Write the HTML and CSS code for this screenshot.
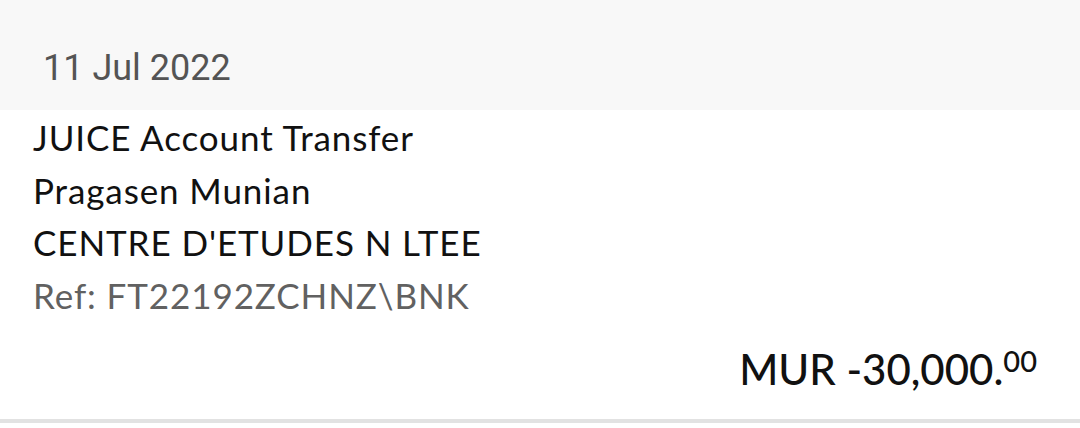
FILE: index.html
```html
<!DOCTYPE html>
<html>
<head>
<meta charset="utf-8">
<link rel="stylesheet" href="styles.css">
</head>
<body>
<div class="header"><span class="date">11 Jul 2022</span></div>
<div class="item">
  <div class="lines">
    <div class="line">JUICE Account Transfer</div>
    <div class="line">Pragasen Munian</div>
    <div class="line">CENTRE D'ETUDES N LTEE</div>
    <div class="line ref">Ref: FT22192ZCHNZ\BNK</div>
  </div>
  <div class="amount">MUR -30,000.<sup class="cents">00</sup></div>
</div>
</body>
</html>
```
FILE: styles.css
```css
html, body {
  margin: 0;
  padding: 0;
  background: #ffffff;
}
body {
  width: 1080px;
  height: 428px;
  overflow: hidden;
}
.header {
  height: 110px;
  background: #f8f8f8;
  display: flex;
  align-items: flex-end;
  padding-left: 43px;
  box-sizing: border-box;
  padding-bottom: 24px;
}
.date {
  font-family: Roboto, sans-serif;
  font-size: 36px;
  color: #545454;
  line-height: 1;
}
.item {
  padding: 1px 43px 0 33px;
  border-bottom: 4px solid #e2e2e2;
  height: 313px;
  box-sizing: border-box;
  display: flex;
  flex-direction: column;
}
.lines {
  font-family: Lato, sans-serif;
  font-size: 35px;
  letter-spacing: 0.9px;
  line-height: 52.5px;
  color: #111111;
}
.ref {
  color: #616161;
}
.amount {
  align-self: flex-end;
  font-family: Lato, sans-serif;
  font-size: 42px;
  line-height: 52px;
  font-weight: 500;
  color: #111111;
  margin-top: 22px;
}
.cents {
  font-size: 29px;
  line-height: 29px;
  vertical-align: top;
  position: relative;
  top: 3px;
}
```
